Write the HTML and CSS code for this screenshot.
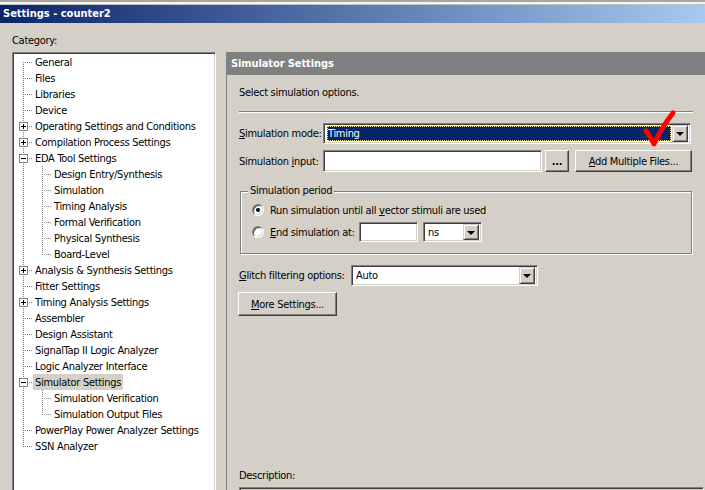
FILE: index.html
```html
<!DOCTYPE html>
<html>
<head>
<meta charset="utf-8">
<title>Settings - counter2</title>
<link rel="stylesheet" href="styles.css">
</head>
<body>
<div class="win">
  <div class="strip"></div>
  <div class="titlebar">Settings - counter2</div>
  <div class="main">
    <div class="left">
      <div class="cat">Category:</div>
      <div class="tree">
        <div class="row"><span class="c f"></span><span class="lbl">General</span></div>
        <div class="row"><span class="c t"></span><span class="lbl">Files</span></div>
        <div class="row"><span class="c t"></span><span class="lbl">Libraries</span></div>
        <div class="row"><span class="c t"></span><span class="lbl">Device</span></div>
        <div class="row"><span class="c t"><span class="box plus"></span></span><span class="lbl">Operating Settings and Conditions</span></div>
        <div class="row"><span class="c t"><span class="box plus"></span></span><span class="lbl">Compilation Process Settings</span></div>
        <div class="row"><span class="c t"><span class="box"></span></span><span class="lbl">EDA Tool Settings</span></div>
        <div class="row"><span class="c p"></span><span class="c t"></span><span class="lbl">Design Entry/Synthesis</span></div>
        <div class="row"><span class="c p"></span><span class="c t"></span><span class="lbl">Simulation</span></div>
        <div class="row"><span class="c p"></span><span class="c t"></span><span class="lbl">Timing Analysis</span></div>
        <div class="row"><span class="c p"></span><span class="c t"></span><span class="lbl">Formal Verification</span></div>
        <div class="row"><span class="c p"></span><span class="c t"></span><span class="lbl">Physical Synthesis</span></div>
        <div class="row"><span class="c p"></span><span class="c l"></span><span class="lbl">Board-Level</span></div>
        <div class="row"><span class="c t"><span class="box plus"></span></span><span class="lbl">Analysis &amp; Synthesis Settings</span></div>
        <div class="row"><span class="c t"></span><span class="lbl">Fitter Settings</span></div>
        <div class="row"><span class="c t"><span class="box plus"></span></span><span class="lbl">Timing Analysis Settings</span></div>
        <div class="row"><span class="c t"></span><span class="lbl">Assembler</span></div>
        <div class="row"><span class="c t"></span><span class="lbl">Design Assistant</span></div>
        <div class="row"><span class="c t"></span><span class="lbl">SignalTap II Logic Analyzer</span></div>
        <div class="row"><span class="c t"></span><span class="lbl">Logic Analyzer Interface</span></div>
        <div class="row"><span class="c t"><span class="box"></span></span><span class="lbl sel">Simulator Settings</span></div>
        <div class="row"><span class="c p"></span><span class="c t"></span><span class="lbl">Simulation Verification</span></div>
        <div class="row"><span class="c p"></span><span class="c l"></span><span class="lbl">Simulation Output Files</span></div>
        <div class="row"><span class="c t"></span><span class="lbl">PowerPlay Power Analyzer Settings</span></div>
        <div class="row"><span class="c l"></span><span class="lbl">SSN Analyzer</span></div>
      </div>
    </div>
    <div class="panel">
      <div class="phead">Simulator Settings</div>
      <div class="pbody">
        <div class="intro">Select simulation options.</div>
        <div class="sep"></div>
        <div class="frow mode-row">
          <span class="flabel"><u>S</u>imulation mode:</span>
          <div class="combo mode">
            <span class="cval selv">Timing</span>
            <span class="dbtn"><span class="arrow"></span></span>
          </div>
        </div>
        <div class="frow input-row">
          <span class="flabel">Simulation <u>i</u>nput:</span>
          <div class="tbox inp"></div>
          <button class="btn dots">...</button>
          <button class="btn addf"><u>A</u>dd Multiple Files...</button>
        </div>
        <div class="group">
          <span class="legend">Simulation period</span>
          <div class="rrow r1"><span class="radio on"></span><span>Run simulation until all <u>v</u>ector stimuli are used</span></div>
          <div class="rrow r2"><span class="radio"></span><span class="endl"><u>E</u>nd simulation at:</span>
            <div class="tbox endt"></div>
            <div class="combo unit"><span class="cval">ns</span><span class="dbtn"><span class="arrow"></span></span></div>
          </div>
        </div>
        <div class="frow glitch-row">
          <span class="flabel glabel"><u>G</u>litch filtering options:</span>
          <div class="combo glitch"><span class="cval">Auto</span><span class="dbtn"><span class="arrow"></span></span></div>
        </div>
        <button class="btn more"><u>M</u>ore Settings...</button>
        <div class="desc-label">Description:</div>
        <div class="desc"></div>
      </div>
    </div>
  </div>
  <svg class="check" width="705" height="490" viewBox="0 0 705 490">
    <path d="M646 131 Q650 136 654 144 Q662 127 673 113" fill="none" stroke="#ff0000" stroke-width="5" stroke-linecap="round" stroke-linejoin="round"/>
  </svg>
</div>
</body>
</html>
```
FILE: styles.css
```css
* { box-sizing: border-box; }
html, body { margin: 0; padding: 0; }
body {
  width: 705px;
  height: 490px;
  overflow: hidden;
  background: #d4d0c8;
  font-family: "DejaVu Sans Condensed", "Liberation Sans", sans-serif;
  font-size: 11px;
  letter-spacing: -0.3px;
  color: #000;
}
u { text-decoration: underline; text-underline-offset: 1px; }
.win { position: relative; width: 705px; height: 490px; overflow: hidden; }
.strip {
  height: 5px;
  background: linear-gradient(to bottom, #a8a6a0 0 2px, #f6f5f1 2px 4px, #c4c1ba 4px 5px);
}
.titlebar {
  height: 18px;
  line-height: 18px;
  padding-left: 3px;
  color: #fff;
  font-weight: bold;
  font-size: 11px;
  letter-spacing: 0;
  background: linear-gradient(to right, #0a246a, #a6caf0);
}
.main { display: flex; gap: 10px; }
.left { width: 216px; padding-left: 12px; flex: none; }
.cat { margin-top: 11px; line-height: 14px; height: 14px; }
.tree {
  margin-top: 4px;
  width: 204px;
  height: 460px;
  background: #fff;
  border: 1px solid;
  border-color: #808080 #fff #fff #808080;
  box-shadow: inset 1px 1px 0 #404040, inset -1px -1px 0 #d4d0c8;
  padding: 1px;
}
.row { display: flex; align-items: center; height: 16px; white-space: nowrap; }
.c {
  flex: none;
  width: 19px;
  height: 16px;
  display: flex;
  align-items: center;
  background-repeat: no-repeat;
}
.c.t {
  background-image:
    repeating-linear-gradient(to bottom, #808080 0 1px, transparent 1px 2px),
    repeating-linear-gradient(to right, #808080 0 1px, transparent 1px 2px);
  background-size: 1px 16px, 9px 1px;
  background-position: 9px 0, 11px 8px;
}
.c.l {
  background-image:
    repeating-linear-gradient(to bottom, #808080 0 1px, transparent 1px 2px),
    repeating-linear-gradient(to right, #808080 0 1px, transparent 1px 2px);
  background-size: 1px 9px, 9px 1px;
  background-position: 9px 0, 11px 8px;
}
.c.f {
  background-image:
    repeating-linear-gradient(to bottom, #808080 0 1px, transparent 1px 2px),
    repeating-linear-gradient(to right, #808080 0 1px, transparent 1px 2px);
  background-size: 1px 8px, 9px 1px;
  background-position: 9px 8px, 11px 8px;
}
.c.p {
  background-image: repeating-linear-gradient(to bottom, #808080 0 1px, transparent 1px 2px);
  background-size: 1px 16px;
  background-position: 9px 0;
}
.box {
  width: 9px;
  height: 9px;
  margin-left: 5px;
  margin-top: 1px;
  border: 1px solid #808080;
  background-color: #fff;
  background-image: linear-gradient(#000, #000);
  background-size: 5px 1px;
  background-position: 1px 3px;
  background-repeat: no-repeat;
}
.box.plus {
  background-image: linear-gradient(#000, #000), linear-gradient(#000, #000);
  background-size: 5px 1px, 1px 5px;
  background-position: 1px 3px, 3px 1px;
}
.lbl { padding: 1px 2px 0 2px; line-height: 16px; height: 16px; overflow: visible; }
.lbl.sel { background: #d4d0c8; }

.panel {
  flex: 1;
  margin-top: 29px;
  border-left: 1px solid #808080;
  height: 470px;
}
.phead {
  height: 23px;
  line-height: 23px;
  background: #808080;
  color: #fff;
  font-weight: bold;
  font-size: 11px;
  letter-spacing: -0.1px;
  padding-left: 4px;
}
.pbody { padding: 11px 11px 0 12px; }
.intro { line-height: 14px; height: 14px; }
.sep {
  margin-top: 11px;
  height: 2px;
  border-top: 1px solid #808080;
  border-bottom: 1px solid #fff;
  margin-right: 1px;
}
.frow { display: flex; align-items: center; }
.flabel { width: 84px; flex: none; white-space: nowrap; }
.mode-row { margin-top: 10px; height: 21px; }
.input-row { margin-top: 6px; height: 22px; }

.combo, .tbox {
  background: #fff;
  border: 1px solid;
  border-color: #808080 #fff #fff #808080;
  box-shadow: inset 1px 1px 0 #404040, inset -1px -1px 0 #d4d0c8;
}
.combo {
  display: flex;
  align-items: stretch;
  padding: 2px;
  height: 21px;
}
.cval {
  flex: 1;
  line-height: 15px;
  padding-left: 2px;
  white-space: nowrap;
}
.selv {
  background: #0a246a;
  color: #fff;
  margin: 0 1px 0 1px;
  padding-left: 1px;
  outline: 1px dotted #f0e890;
  outline-offset: -1px;
}
.dbtn {
  flex: none;
  width: 16px;
  height: 17px;
  background: #d4d0c8;
  border: 1px solid;
  border-color: #d4d0c8 #404040 #404040 #d4d0c8;
  box-shadow: inset 1px 1px 0 #fff, inset -1px -1px 0 #808080;
  display: flex;
  align-items: center;
  justify-content: center;
  margin-top: -1px;
}
.arrow {
  width: 0;
  height: 0;
  border-left: 4px solid transparent;
  border-right: 4px solid transparent;
  border-top: 4px solid #000;
  margin-top: 1px;
}
.mode { width: 368px; }
.tbox { height: 22px; }
.inp { width: 219px; }

.btn {
  font-family: inherit;
  font-size: 11px;
  letter-spacing: inherit;
  color: #000;
  background: #d4d0c8;
  border: 1px solid;
  border-color: #fff #404040 #404040 #fff;
  box-shadow: inset -1px -1px 0 #808080;
  padding: 0;
  margin: 0;
  white-space: nowrap;
}
.dots { width: 24px; height: 22px; margin-left: 3px; font-weight: bold; line-height: 14px; padding-top: 2px; }
.addf { width: 117px; height: 22px; margin-left: 6px; }

.group {
  margin-top: 19px;
  margin-left: 1px;
  margin-right: 2px;
  height: 63px;
  border: 1px solid #808080;
  box-shadow: inset 1px 1px 0 #fff, 1px 1px 0 #fff;
  padding: 0 0 0 11px;
}
.legend {
  display: table;
  margin: -8px 0 0 -4px;
  padding: 0 2px 0 2px;
  background: #d4d0c8;
  line-height: 14px;
}
.rrow { display: flex; align-items: center; white-space: nowrap; }
.r1 { margin-top: 4px; height: 16px; }
.r2 { margin-top: 4px; height: 20px; }
.radio {
  flex: none;
  width: 12px;
  height: 12px;
  border-radius: 50%;
  background: #fff;
  border: 1px solid;
  border-color: #808080 #fff #fff #808080;
  box-shadow: inset 1px 1px 0 #404040, inset -1px -1px 0 #d4d0c8;
  margin-right: 6px;
  display: flex;
  align-items: center;
  justify-content: center;
}
.radio.on::after {
  content: "";
  width: 4px;
  height: 4px;
  border-radius: 50%;
  background: #000;
}
.endl { width: 89px; }
.endt { width: 59px; height: 20px; }
.unit { width: 59px; height: 20px; margin-left: 5px; padding: 2px; }
.unit .dbtn { height: 16px; }
.glitch-row { margin-top: 11px; height: 21px; }
.glabel { width: 112px; }
.glitch { width: 187px; }
.more { display: block; margin-top: 6px; margin-left: -1px; width: 99px; height: 24px; }
.desc-label { margin-top: 153px; line-height: 14px; height: 14px; }
.desc {
  margin-top: 4px;
  margin-right: -10px;
  height: 30px;
  background: #d4d0c8;
  border: 1px solid;
  border-color: #808080 #fff #fff #808080;
  box-shadow: inset 1px 1px 0 #404040;
}
.check { position: absolute; left: 0; top: 0; pointer-events: none; }
```
